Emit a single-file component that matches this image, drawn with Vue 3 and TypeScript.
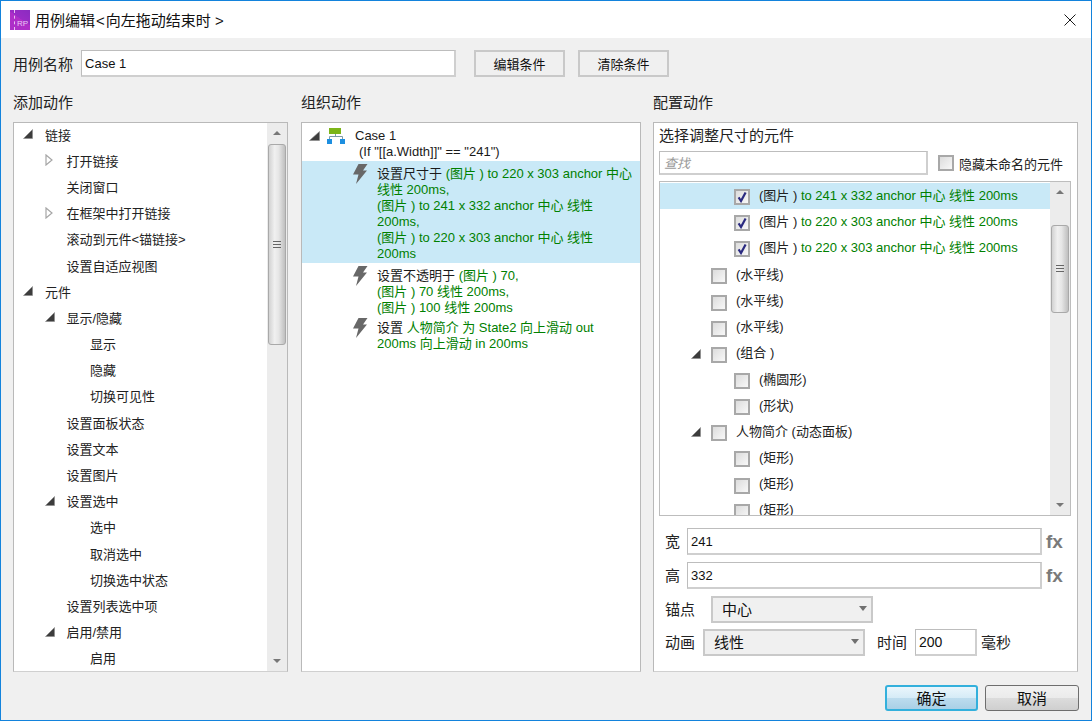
<script setup lang="ts">
interface TreeRow {
  label: string;
  level: number;
  arrow?: "open" | "closed";
}

interface Seg {
  text: string;
  green?: boolean;
}

interface ActionBlock {
  selected?: boolean;
  lines: Seg[][];
}

interface TargetRow {
  name: string;
  detail?: string;
  level: number;
  checked?: boolean;
  arrow?: boolean;
  selected?: boolean;
  gap?: boolean;
}

const addActions: TreeRow[] = [
  { label: "链接", level: 0, arrow: "open" },
  { label: "打开链接", level: 1, arrow: "closed" },
  { label: "关闭窗口", level: 1 },
  { label: "在框架中打开链接", level: 1, arrow: "closed" },
  { label: "滚动到元件<锚链接>", level: 1 },
  { label: "设置自适应视图", level: 1 },
  { label: "元件", level: 0, arrow: "open" },
  { label: "显示/隐藏", level: 1, arrow: "open" },
  { label: "显示", level: 2 },
  { label: "隐藏", level: 2 },
  { label: "切换可见性", level: 2 },
  { label: "设置面板状态", level: 1 },
  { label: "设置文本", level: 1 },
  { label: "设置图片", level: 1 },
  { label: "设置选中", level: 1, arrow: "open" },
  { label: "选中", level: 2 },
  { label: "取消选中", level: 2 },
  { label: "切换选中状态", level: 2 },
  { label: "设置列表选中项", level: 1 },
  { label: "启用/禁用", level: 1, arrow: "open" },
  { label: "启用", level: 2 },
];

const actions: ActionBlock[] = [
  {
    selected: true,
    lines: [
      [{ text: "设置尺寸于 " }, { text: "(图片 ) to 220 x 303 anchor 中心", green: true }],
      [{ text: "线性 200ms,", green: true }],
      [{ text: "(图片 ) to 241 x 332 anchor 中心 线性", green: true }],
      [{ text: "200ms,", green: true }],
      [{ text: "(图片 ) to 220 x 303 anchor 中心 线性", green: true }],
      [{ text: "200ms", green: true }],
    ],
  },
  {
    lines: [
      [{ text: "设置不透明于 " }, { text: "(图片 ) 70,", green: true }],
      [{ text: "(图片 ) 70 线性 200ms,", green: true }],
      [{ text: "(图片 ) 100 线性 200ms", green: true }],
    ],
  },
  {
    lines: [
      [{ text: "设置 " }, { text: "人物简介 为 State2 向上滑动 out", green: true }],
      [{ text: "200ms 向上滑动 in 200ms", green: true }],
    ],
  },
];

const targets: TargetRow[] = [
  { name: "(图片 )", detail: " to 241 x 332 anchor 中心 线性 200ms", level: 2, checked: true, selected: true },
  { name: "(图片 )", detail: " to 220 x 303 anchor 中心 线性 200ms", level: 2, checked: true },
  { name: "(图片 )", detail: " to 220 x 303 anchor 中心 线性 200ms", level: 2, checked: true },
  { name: "(水平线)", level: 1, gap: true },
  { name: "(水平线)", level: 1 },
  { name: "(水平线)", level: 1 },
  { name: "(组合 )", level: 1, arrow: true },
  { name: "(椭圆形)", level: 2 },
  { name: "(形状)", level: 2 },
  { name: "人物简介 (动态面板)", level: 1, arrow: true },
  { name: "(矩形)", level: 2 },
  { name: "(矩形)", level: 2 },
  { name: "(矩形)", level: 2 },
];

const treeIndents = [8, 29.5, 53];
const treeIndent = (level: number) => `${treeIndents[level]}px`;
const targetIndent = (level: number) => `${28 + level * 23}px`;
</script>

<template>
  <div class="dialog">
    <header class="titlebar">
      <div class="logo"><span class="logo-text">RP</span></div>
      <span class="title">用例编辑<span class="lt">&lt;</span>向左拖动结束时 &gt;</span>
      <svg class="close" width="12" height="12" viewBox="0 0 12 12">
        <path d="M0.5 0.5 11.5 11.5M11.5 0.5 0.5 11.5" stroke="#1a1a1a" fill="none" />
      </svg>
    </header>

    <div class="content">
      <div class="name-row">
        <label class="big-label">用例名称</label>
        <div class="input name-input">Case 1</div>
        <button class="flat-btn first">编辑条件</button>
        <button class="flat-btn">清除条件</button>
      </div>

      <div class="columns">
        <section class="col col-left">
          <h3 class="big-label heading">添加动作</h3>
          <div class="panel tree-panel">
            <div class="tree">
              <div v-for="row in addActions" :key="row.label" class="tree-row" :style="{ paddingLeft: treeIndent(row.level) }">
                <span class="arrow-box">
                  <svg v-if="row.arrow === 'open'" width="10" height="10" viewBox="0 0 10 10"><path d="M9.5 0.5V9.5H0.5Z" fill="#3c3c3c" stroke="#8a8a8a" stroke-width="0.6" /></svg>
                  <svg v-else-if="row.arrow === 'closed'" width="8" height="12" viewBox="0 0 8 12"><path d="M1 1 7 6 1 11Z" fill="#fff" stroke="#a6a6a6" stroke-width="1.2" /></svg>
                </span>
                <span class="tree-label">{{ row.label }}</span>
              </div>
            </div>
            <div class="scrollbar">
              <svg class="sb-arrow" width="10" height="6" viewBox="0 0 10 6"><path d="M5 1 9 5H1Z" fill="#777" /></svg>
              <div class="sb-track left-track">
                <div class="sb-thumb left-thumb"><span class="grip"></span></div>
              </div>
              <svg class="sb-arrow" width="10" height="6" viewBox="0 0 10 6"><path d="M5 5 1 1H9Z" fill="#777" /></svg>
            </div>
          </div>
        </section>

        <section class="col col-mid">
          <h3 class="big-label heading">组织动作</h3>
          <div class="panel org-panel">
            <div class="case-head">
              <svg class="case-arrow" width="11" height="10" viewBox="0 0 11 10"><path d="M10.5 0.5V9.5H0.5Z" fill="#3c3c3c" stroke="#8a8a8a" stroke-width="0.6" /></svg>
              <svg class="case-icon" width="18" height="16" viewBox="0 0 18 16">
                <rect x="2" y="0" width="12" height="6" fill="#7cb518" />
                <path d="M8.5 6V9M2.5 11V8.5H15.5V11" stroke="#7d9aa8" fill="none" />
                <rect x="0" y="11" width="5" height="5" fill="#1d8fe0" />
                <rect x="13" y="11" width="5" height="5" fill="#1d8fe0" />
              </svg>
              <div class="case-text">
                <div>Case 1</div>
                <div class="case-cond">(If "[[a.Width]]" == "241")</div>
              </div>
            </div>
            <div v-for="(block, i) in actions" :key="i" class="action" :class="{ selected: block.selected }">
              <svg class="bolt" width="16" height="20" viewBox="0 0 16 20">
                <path d="M6.5 0H15.5L11 6.5H15L4 20 6.5 10.5H1Z" fill="#686868" />
              </svg>
              <div class="action-text">
                <div v-for="(line, j) in block.lines" :key="j" class="action-line">
                  <span v-for="(seg, k) in line" :key="k" :class="{ green: seg.green }">{{ seg.text }}</span>
                </div>
              </div>
            </div>
          </div>
        </section>

        <section class="col col-right">
          <h3 class="big-label heading">配置动作</h3>
          <div class="panel config-panel">
            <div class="big-label config-title">选择调整尺寸的元件</div>
            <div class="search-row">
              <div class="input search-input">查找</div>
              <span class="check"></span>
              <span class="hide-label">隐藏未命名的元件</span>
            </div>

            <div class="target-list">
              <div class="targets">
                <div
                  v-for="(row, i) in targets"
                  :key="i"
                  class="target-row"
                  :class="{ selected: row.selected, gap: row.gap }"
                  :style="{ paddingLeft: targetIndent(row.level) }"
                >
                  <svg v-if="row.arrow" class="target-arrow" width="10" height="10" viewBox="0 0 10 10"><path d="M9.5 0.5V9.5H0.5Z" fill="#3c3c3c" stroke="#8a8a8a" stroke-width="0.6" /></svg>
                  <span class="check">
                    <svg v-if="row.checked" width="12" height="12" viewBox="0 0 12 12">
                      <path d="M2.6 6.4 5 10 9.6 1.4" stroke="#2a2a80" stroke-width="2.2" fill="none" />
                    </svg>
                  </span>
                  <span class="target-label">{{ row.name }}<span v-if="row.detail" class="green">{{ row.detail }}</span></span>
                </div>
              </div>
              <div class="scrollbar">
                <svg class="sb-arrow" width="10" height="6" viewBox="0 0 10 6"><path d="M5 1 9 5H1Z" fill="#777" /></svg>
                <div class="sb-track right-track">
                  <div class="sb-thumb right-thumb"><span class="grip"></span></div>
                </div>
                <svg class="sb-arrow" width="10" height="6" viewBox="0 0 10 6"><path d="M5 5 1 1H9Z" fill="#777" /></svg>
              </div>
            </div>

            <div class="field-row size-first">
              <span class="big-label field-label">宽</span>
              <div class="input size-input">241</div>
              <span class="fx">fx</span>
            </div>
            <div class="field-row size-second">
              <span class="big-label field-label">高</span>
              <div class="input size-input">332</div>
              <span class="fx">fx</span>
            </div>
            <div class="field-row anchor-row">
              <span class="big-label anchor-label">锚点</span>
              <div class="select anchor-select">
                <span>中心</span>
                <svg width="8" height="5" viewBox="0 0 8 5"><path d="M0 0H8L4 5Z" fill="#707070" /></svg>
              </div>
            </div>
            <div class="field-row anim-row">
              <span class="big-label anim-label">动画</span>
              <div class="select anim-select">
                <span>线性</span>
                <svg width="8" height="5" viewBox="0 0 8 5"><path d="M0 0H8L4 5Z" fill="#707070" /></svg>
              </div>
              <span class="big-label time-label">时间</span>
              <div class="input time-input">200</div>
              <span class="big-label ms-label">毫秒</span>
            </div>
          </div>
        </section>
      </div>

      <footer class="footer">
        <button class="dlg-btn primary">确定</button>
        <button class="dlg-btn">取消</button>
      </footer>
    </div>
  </div>
</template>

<style>
html,
body {
  margin: 0;
  background: #f0f0f0;
}
</style>

<style scoped>
.dialog {
  width: 1092px;
  height: 721px;
  box-sizing: border-box;
  border: 1px solid #1383dc;
  background: #f0f0f0;
  display: flex;
  flex-direction: column;
  font-family: "Liberation Sans", "Noto Sans CJK SC", sans-serif;
  font-size: 13px;
  color: #1a1a1a;
  overflow: hidden;
}

.titlebar {
  height: 37px;
  flex: none;
  background: #fff;
  display: flex;
  align-items: center;
  padding: 0 15px 0 9px;
}

.logo {
  width: 20px;
  height: 20px;
  position: relative;
  background: linear-gradient(215deg, #8a2cc0 0%, #9a2cc6 45%, #b02ec8 46%, #ac30c8 100%);
  overflow: hidden;
}

.logo::before {
  content: "";
  position: absolute;
  left: 4px;
  top: 0;
  bottom: 0;
  border-left: 1px dashed #e6c0f0;
}

.logo-text {
  position: absolute;
  right: 2px;
  bottom: 2px;
  font-size: 8px;
  line-height: 9px;
  color: #e8c8f4;
}

.title {
  margin-left: 5px;
  font-size: 15px;
  flex: 1;
  color: #111;
}

.lt {
  margin: 0 1px;
}

.content {
  flex: 1;
  display: flex;
  flex-direction: column;
  padding: 12px 13px 0 12px;
  min-height: 0;
}

.big-label {
  font-size: 15px;
  font-weight: 400;
  color: #222;
  margin: 0;
}

.name-row {
  display: flex;
  align-items: center;
  height: 27px;
}

.input {
  box-sizing: border-box;
  background: #fff;
  border-style: solid;
  border-width: 1px 2px 2px 1px;
  border-color: #bdbdbd #cfcfcf #cfcfcf #bdbdbd;
  display: flex;
  align-items: center;
  padding-left: 3px;
  color: #111;
}

.name-input {
  width: 375px;
  height: 27px;
  margin-left: 8px;
  padding-top: 1px;
}

.flat-btn {
  width: 91px;
  height: 27px;
  margin-left: 13px;
  background: #f0f0f0;
  border: 2px solid #c9c9c9;
  font: inherit;
  color: #111;
  padding: 0;
}

.flat-btn.first {
  margin-left: 18px;
}

.columns {
  display: flex;
  margin-top: 16px;
  height: 579px;
}

.col {
  display: flex;
  flex-direction: column;
}

.col-left {
  width: 275px;
}

.col-mid {
  width: 340px;
  margin-left: 13px;
}

.col-right {
  width: 425px;
  margin-left: 12px;
}

.heading {
  height: 29px;
  line-height: 20px;
}

.panel {
  height: 550px;
  box-sizing: border-box;
  background: #fff;
  border: 1px solid #b9b9b9;
  border-bottom-color: #d0d0d0;
}

.tree-panel {
  display: flex;
}

.tree {
  flex: 1;
  overflow: hidden;
}

.tree-row {
  height: 26.2px;
  display: flex;
  align-items: center;
  box-sizing: border-box;
  color: #222;
  white-space: nowrap;
}

.tree-row:first-child {
  margin-top: -2px;
}

.arrow-box {
  width: 23px;
  flex: none;
  display: flex;
  align-items: center;
  padding-left: 1px;
  box-sizing: border-box;
}

.scrollbar {
  width: 20px;
  flex: none;
  background: #ececec;
  display: flex;
  flex-direction: column;
  align-items: center;
}

.sb-arrow {
  flex: none;
  margin: 7px 0;
}

.sb-track {
  flex: 1;
  width: 100%;
  box-sizing: border-box;
  padding: 0 1px;
}

.left-track {
  padding-top: 1px;
}

.right-track {
  padding-top: 23px;
}

.sb-thumb {
  box-sizing: border-box;
  width: 18px;
  border: 1px solid #a9a9a9;
  border-radius: 3px;
  background: linear-gradient(90deg, #d2d2d2 0%, #f0f0f0 35%, #e6e6e6 60%, #bfbfbf 100%);
  display: flex;
  align-items: center;
  justify-content: center;
}

.left-thumb {
  height: 201px;
}

.right-thumb {
  height: 88px;
}

.grip {
  width: 8px;
  height: 8px;
  background: repeating-linear-gradient(180deg, #666 0 1px, transparent 1px 3px);
}

.case-head {
  display: flex;
  height: 38px;
  padding: 5px 0 0 7px;
  box-sizing: border-box;
  line-height: 16px;
}

.case-arrow {
  margin-top: 3px;
  flex: none;
}

.case-icon {
  margin-left: 7px;
  flex: none;
}

.case-text {
  margin-left: 10px;
}

.case-cond {
  margin-left: 4px;
}

.action {
  display: flex;
  padding: 5px 0 1px 50px;
  line-height: 16px;
}

.action:last-child {
  padding-top: 3px;
}

.action.selected {
  background: #c9e9f7;
}

.bolt {
  flex: none;
  margin-top: -2px;
}

.action-text {
  margin-left: 9px;
  white-space: nowrap;
}

.green {
  color: #008000;
}

.config-panel {
  padding: 0 5px;
}

.config-title {
  height: 28px;
  line-height: 26px;
}

.search-row {
  display: flex;
  align-items: center;
  height: 24px;
}

.search-input {
  width: 269px;
  height: 24px;
  color: #9a9a9a;
  font-style: italic;
  padding-left: 4px;
}

.search-row .check {
  margin-left: 10px;
}

.hide-label {
  margin-left: 5px;
  white-space: nowrap;
  color: #222;
}

.check {
  width: 16px;
  height: 16px;
  flex: none;
  box-sizing: border-box;
  border: 2px solid #a8a8a8;
  background: linear-gradient(135deg, #dcdcdc 0%, #f8f8f8 100%);
  display: inline-flex;
  align-items: center;
  justify-content: center;
}

.target-list {
  width: 412px;
  height: 335px;
  margin-top: 6px;
  box-sizing: border-box;
  border: 1px solid #bdbdbd;
  display: flex;
}

.targets {
  width: 390px;
  flex: none;
  overflow: hidden;
  padding-top: 1px;
}

.target-row {
  height: 26.15px;
  display: flex;
  align-items: center;
  box-sizing: border-box;
  position: relative;
  white-space: nowrap;
  color: #222;
}

.target-row.gap {
  margin-top: 1px;
}

.target-row.selected {
  background: #c9e9f7;
}

.target-row .check {
  margin-top: 2px;
}

.target-arrow {
  position: absolute;
  margin-left: -20px;
}

.target-label {
  margin-left: 9px;
  margin-bottom: 4px;
}

.field-row {
  display: flex;
  align-items: center;
}

.field-row .big-label {
  margin-bottom: 2px;
}

.size-first {
  margin-top: 12px;
  height: 27px;
}

.size-second {
  margin-top: 7px;
  height: 27px;
}

.field-label {
  margin-left: 6px;
  width: 22px;
  flex: none;
}

.size-input {
  width: 355px;
  height: 27px;
}

.fx {
  margin-left: 4px;
  font-weight: 700;
  font-size: 19px;
  color: #7a7a7a;
}

.anchor-row {
  margin-top: 7px;
  height: 27px;
}

.anim-row {
  margin-top: 6px;
  height: 27px;
}

.anchor-label {
  margin-left: 6px;
  width: 46px;
  flex: none;
}

.anim-label {
  margin-left: 6px;
  width: 38px;
  flex: none;
}

.select {
  height: 27px;
  width: 162px;
  box-sizing: border-box;
  border: 2px solid #c9c9c9;
  background: #f0f0f0;
  display: flex;
  align-items: center;
  justify-content: space-between;
  padding: 0 4px 2px 9px;
  font-size: 15px;
  color: #111;
}

.time-label {
  margin-left: 12px;
}

.time-input {
  width: 62px;
  height: 27px;
  margin-left: 8px;
  padding-left: 3px;
  font-size: 14px;
}

.ms-label {
  margin-left: 4px;
}

.footer {
  display: flex;
  justify-content: flex-end;
  gap: 7px;
  margin-top: 13px;
  margin-right: -1px;
}

.dlg-btn {
  width: 94px;
  height: 26px;
  box-sizing: border-box;
  border: 1px solid #6e6e6e;
  border-radius: 3px;
  background: linear-gradient(180deg, #f2f2f2 0%, #ebebeb 50%, #dcdcdc 51%, #cfcfcf 100%);
  font: inherit;
  font-size: 15px;
  color: #111;
  padding: 0 0 2px;
}

.dlg-btn.primary {
  width: 93px;
  border: 2px solid #33b0dc;
  background: linear-gradient(180deg, #eaf6fc 0%, #d5ebf7 50%, #bcdcee 51%, #a9d0e6 100%);
}
</style>
